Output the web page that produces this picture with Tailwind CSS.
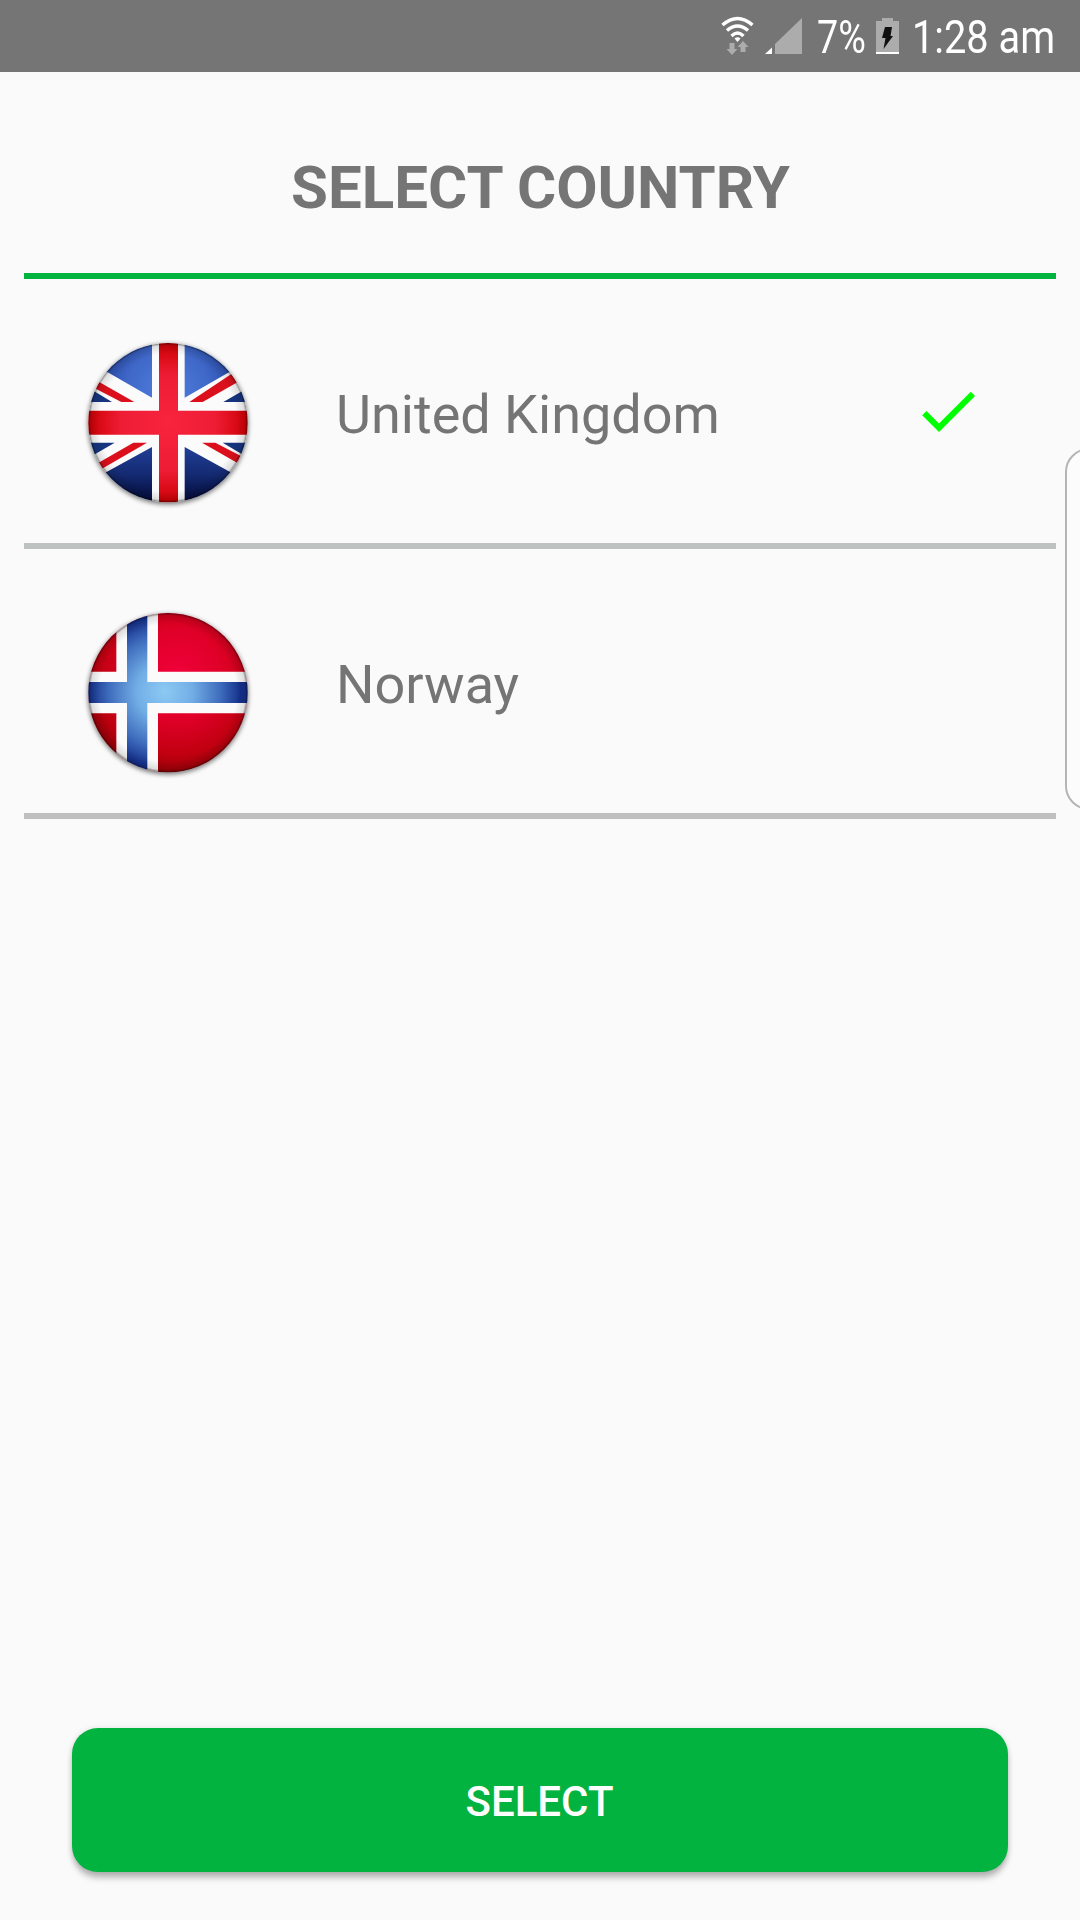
<!DOCTYPE html>
<html lang="en">
<head>
<meta charset="utf-8">
<title>Select country</title>
<script src="https://cdn.jsdelivr.net/npm/@tailwindcss/browser@4"></script>
</head>
<body class="bg-[#fafafa]">
<main class="relative flex h-[1920px] w-[1080px] flex-col overflow-hidden bg-[#fafafa] font-['Roboto',sans-serif] text-[#757575]">
  <header class="flex h-[72px] shrink-0 items-start bg-[#757575] pl-[718px] text-white">
    <svg class="h-[72px] w-[99px] shrink-0" viewBox="718 0 99 72">
      <g fill="none" stroke="#fff" stroke-width="3.4">
        <path d="M722.5 25Q737.5 12 752.5 25"/>
        <path d="M727 30.5Q737.5 21.500 748 30.5"/>
        <path d="M731.500 36Q737.5 30 743.5 36"/>
      </g>
      <path d="M734.500 38.500Q737.500 36 740.500 38.500L737.500 42Z" fill="#fff"/>
      <path d="M729.500 43h5v6h3l-5.500 6-5.500-6h3zM740.500 52v-5h-3l5.500-6 5.500 6h-3v5z" fill="#acacac"/>
      <path d="M802 18v36h-27V44z" fill="#acacac"/>
      <path d="M772 47.500V54h-7z" fill="#fff"/>
    </svg>
    <div class="w-[59px] shrink-0 pt-[10px] text-[46px] leading-[54px]"><span class="inline-block origin-left scale-x-[0.82] whitespace-nowrap">7%</span></div>
    <svg class="h-[72px] w-[36px] shrink-0" viewBox="876 0 36 72">
      <path d="M882 18h11v3h6v31h-23V21h6z" fill="#acacac"/>
      <path d="M876 52h23v2h-23z" fill="#fff"/>
      <path d="M885 27h7l-1.500 9h2.500l-9.500 13 2-11H882z" fill="#111"/>
    </svg>
    <div class="w-[150px] shrink-0 pt-[10px] text-[46px] leading-[54px]"><span class="inline-block origin-left scale-x-[0.865] whitespace-nowrap">1:28 am</span></div>
  </header>

  <section class="flex flex-1 flex-col px-6">
    <h1 class="flex h-[207px] shrink-0 justify-center border-b-6 border-[#03b340] pt-[81px] pl-px text-[60px] leading-[70px] font-bold">SELECT COUNTRY</h1>
    <ul>
      <li class="flex h-[270px] items-start border-b-6 border-[#bec2c0] pl-[46px]">
        <svg class="mt-[46px] size-[200px] shrink-0" viewBox="0 0 600 600">
          <defs>
            <clipPath id="disc"><circle cx="294" cy="293" r="239"/></clipPath>
            <filter id="soft" x="-20%" y="-20%" width="140%" height="140%"><feGaussianBlur stdDeviation="8"/></filter>
            <radialGradient id="sky" cx="294" cy="200" r="250" gradientUnits="userSpaceOnUse">
              <stop offset="0" stop-color="#5080e0"/><stop offset=".5" stop-color="#3f68c8"/><stop offset="1" stop-color="#1c3a96"/>
            </radialGradient>
            <linearGradient id="deep" x1="0" y1="366" x2="0" y2="531" gradientUnits="userSpaceOnUse">
              <stop offset="0" stop-color="#213f96"/><stop offset=".5" stop-color="#142a72"/><stop offset="1" stop-color="#030a38"/>
            </linearGradient>
            <radialGradient id="cross" cx="294" cy="293" r="240" gradientUnits="userSpaceOnUse">
              <stop offset="0" stop-color="#f8243e"/><stop offset=".6" stop-color="#ee1c34"/><stop offset="1" stop-color="#cd0004"/>
            </radialGradient>
            <radialGradient id="rim" cx="294" cy="293" r="239" gradientUnits="userSpaceOnUse">
              <stop offset=".86" stop-color="#000" stop-opacity="0"/><stop offset=".97" stop-color="#000" stop-opacity=".12"/><stop offset="1" stop-color="#000" stop-opacity=".5"/>
            </radialGradient>
          </defs>
          <circle cx="294" cy="298" r="240" fill="#000" opacity=".55" filter="url(#soft)"/>
          <g clip-path="url(#disc)">
            <rect x="50" y="50" width="490" height="490" fill="#fbfbfb"/>
            <path d="M246 50V218L100 134V50zM344 50V218L490 134V50z" fill="url(#sky)"/>
            <path d="M246 366V540H100V446zM344 366V540H490V446z" fill="url(#deep)"/>
            <path d="M50 185L126 231H50zM540 185L460 231H540zM50 353H134L50 402zM540 353H458L540 402z" fill="#17357f"/>
            <path d="M60 155L193 231H154L60 182zM510 130L358 231H398L540 150zM231 353L70 446V422L190 353zM396 353L530 430V402L436 353z" fill="#dc101c"/>
            <path d="M267 50h57v207h220v72H324v211h-57V329H50v-72h217z" fill="url(#cross)"/>
            <circle cx="294" cy="293" r="239" fill="url(#rim)"/>
          </g>
        </svg>
        <span class="mt-[104px] ml-[66px] text-[54px] leading-[64px]">United Kingdom</span>
        <svg class="mt-[96px] mr-[72px] ml-auto size-[72px]" viewBox="0 0 24 24" fill="#00ff00"><path d="M9 16.170 4.830 12l-1.420 1.410L9 19 21 7l-1.410-1.410z"/></svg>
      </li>
      <li class="flex h-[270px] items-start border-b-6 border-[#bfbfbf] pl-[46px]">
        <svg class="mt-[46px] size-[200px] shrink-0" viewBox="0 0 600 600">
          <defs>
            <radialGradient id="red" cx="320" cy="240" r="300" gradientUnits="userSpaceOnUse">
              <stop offset="0" stop-color="#f0003a"/><stop offset=".45" stop-color="#e00028"/><stop offset=".8" stop-color="#c00010"/><stop offset="1" stop-color="#960006"/>
            </radialGradient>
            <radialGradient id="blue" cx="284" cy="290" r="240" gradientUnits="userSpaceOnUse">
              <stop offset="0" stop-color="#8ccaf4"/><stop offset=".35" stop-color="#72aee6"/><stop offset=".7" stop-color="#3e6cbc"/><stop offset=".95" stop-color="#15308c"/>
            </radialGradient>
          </defs>
          <circle cx="294" cy="298" r="240" fill="#000" opacity=".55" filter="url(#soft)"/>
          <g clip-path="url(#disc)">
            <rect x="50" y="50" width="490" height="490" fill="url(#red)"/>
            <path d="M139 50h125v180h280v125H264v185H139V355H50V230h89z" fill="#fbfbfb"/>
            <path d="M171 50h61v211h312v63H232v216h-61V324H50v-63h121z" fill="url(#blue)"/>
            <circle cx="294" cy="293" r="239" fill="url(#rim)"/>
          </g>
        </svg>
        <span class="mt-[104px] ml-[66px] text-[54px] leading-[64px]">Norway</span>
      </li>
    </ul>
    <button class="mx-12 mt-auto mb-12 flex h-36 shrink-0 items-center justify-center rounded-[26px] bg-[#03b340] pt-[3px] pr-px text-[42px] font-medium text-white shadow-[0_7px_6px_-1px_rgba(0,0,0,0.24),0_1px_6px_rgba(0,0,0,0.14)]">SELECT</button>
  </section>

  <div class="absolute top-[448px] left-[1065px] h-[362px] w-12 rounded-[24px] border-2 border-[#b4b4b4] bg-[#fcfcfc]"></div>
</main>
</body>
</html>
